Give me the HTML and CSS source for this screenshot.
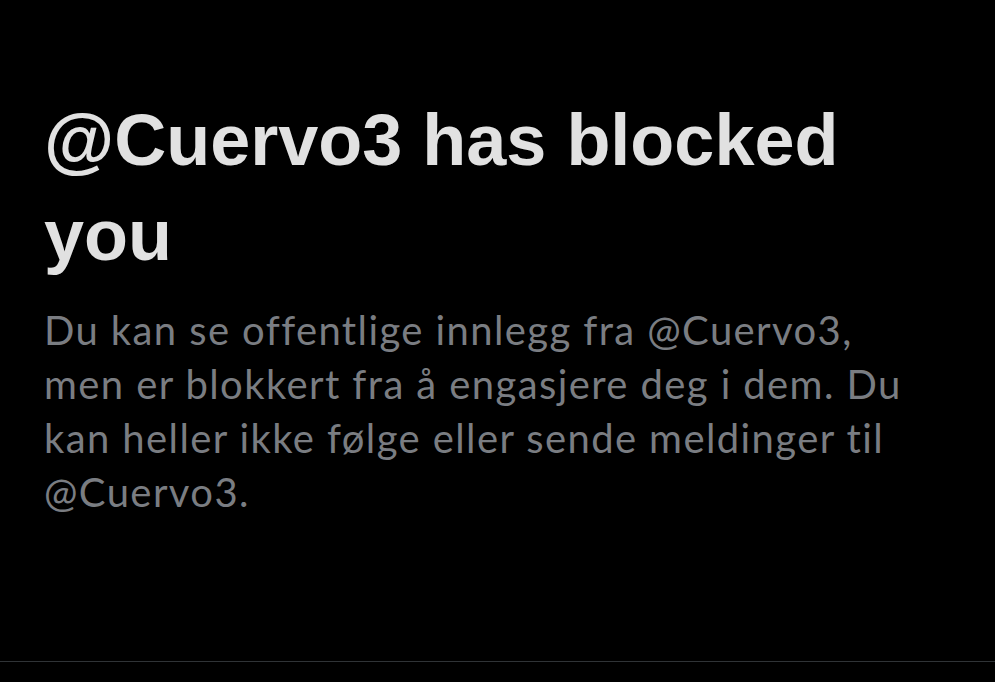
FILE: index.html
```html
<html>
<head>
    <title>@Cuervo3 has blocked you</title>
    <link rel="stylesheet" href="styles.css">
</head>
<body>
    <div class="blocked">
        <div class="blocked-body">
            <h1 class="blocked-title">@Cuervo3 has blocked you</h1>
            <p class="blocked-text">Du kan se offentlige innlegg fra @Cuervo3, men er blokkert fra å engasjere deg i dem. Du kan heller ikke følge eller sende meldinger til @Cuervo3.</p>
        </div>
    </div>
</body>
</html>
```

FILE: styles.css
```css
body {
    margin: 0;
    background: #000;
    font-family: "Liberation Sans", Arial, sans-serif;
}

.blocked {
    height: 662px;
    border-bottom: 1px solid #2f3336;
    box-sizing: border-box;
}

.blocked-body {
    padding: 93px 44px 0 44px;
    max-width: 880px;
}

.blocked-title {
    margin: 0;
    font-size: 72px;
    line-height: 95px;
    font-weight: 700;
    color: #e1e1e1;
}

.blocked-text {
    margin: 20px 0 0 0;
    font-family: Lato, "Noto Sans", sans-serif;
    font-size: 40px;
    line-height: 54px;
    letter-spacing: 1.4px;
    color: #7a7d82;
}
```
